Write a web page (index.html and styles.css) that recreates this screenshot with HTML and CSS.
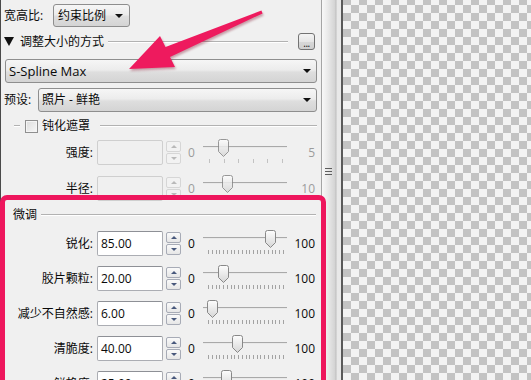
FILE: index.html
```html
<!DOCTYPE html>
<html lang="zh-CN">
<head>
<meta charset="utf-8">
<title>PhotoZoom</title>
<link rel="stylesheet" href="styles.css">
</head>
<body>
<div class="app">
  <div class="panel">
    <div class="row r-aspect">
      <span class="lbl lbl-aspect">宽高比:</span>
      <div class="combo combo-aspect"><span>约束比例</span><i class="caret"></i></div>
    </div>

    <div class="row gh-method">
      <svg class="tri" width="10" height="9" viewBox="0 0 10 9"><path d="M0 0H10L5 9Z" fill="#111"/></svg>
      <span class="gh-text">调整大小的方式</span>
      <span class="groove"></span>
      <button class="dots">...</button>
    </div>

    <div class="combo combo-wide"><span>S-Spline Max</span><i class="caret"></i></div>

    <div class="row r-preset">
      <span class="lbl lbl-preset">预设:</span>
      <div class="combo combo-preset"><span>照片 - 鲜艳</span><i class="caret"></i></div>
    </div>

    <div class="row gh-mask">
      <span class="groove lead"></span>
      <span class="check"></span>
      <span class="gh-text mask-text">钝化遮罩</span>
      <span class="groove"></span>
    </div>

    <div class="param disabled p-first">
      <span class="plabel">强度:</span>
      <span class="input"></span>
      <span class="spin"><i class="up"></i><i class="down"></i></span>
      <span class="min">0</span>
      <div class="slider"><span class="track"></span><span class="ticks t5"></span><span class="thumb" style="left:15px"></span></div>
      <span class="max">5</span>
    </div>

    <div class="param disabled p-second">
      <span class="plabel">半径:</span>
      <span class="input"></span>
      <span class="spin"><i class="up"></i><i class="down"></i></span>
      <span class="min">0</span>
      <div class="slider"><span class="track"></span><span class="ticks t10"></span><span class="thumb" style="left:19px"></span></div>
      <span class="max">10</span>
    </div>

    <div class="row gh-fine">
      <span class="gh-text fine-text">微调</span>
      <span class="groove"></span>
    </div>

    <div class="param p-fine-first">
      <span class="plabel">锐化:</span>
      <span class="input">85.00</span>
      <span class="spin"><i class="up"></i><i class="down"></i></span>
      <span class="min">0</span>
      <div class="slider"><span class="track"></span><span class="ticks t20"></span><span class="thumb" style="left:62px"></span></div>
      <span class="max">100</span>
    </div>

    <div class="param p-fine">
      <span class="plabel">胶片颗粒:</span>
      <span class="input">20.00</span>
      <span class="spin"><i class="up"></i><i class="down"></i></span>
      <span class="min">0</span>
      <div class="slider"><span class="track"></span><span class="ticks t20"></span><span class="thumb" style="left:15px"></span></div>
      <span class="max">100</span>
    </div>

    <div class="param p-fine">
      <span class="plabel">减少不自然感:</span>
      <span class="input">6.00</span>
      <span class="spin"><i class="up"></i><i class="down"></i></span>
      <span class="min">0</span>
      <div class="slider"><span class="track"></span><span class="ticks t20"></span><span class="thumb" style="left:4px"></span></div>
      <span class="max">100</span>
    </div>

    <div class="param p-fine">
      <span class="plabel">清脆度:</span>
      <span class="input">40.00</span>
      <span class="spin"><i class="up"></i><i class="down"></i></span>
      <span class="min">0</span>
      <div class="slider"><span class="track"></span><span class="ticks t20"></span><span class="thumb" style="left:29px"></span></div>
      <span class="max">100</span>
    </div>

    <div class="param p-fine">
      <span class="plabel">鲜艳度:</span>
      <span class="input">25.00</span>
      <span class="spin"><i class="up"></i><i class="down"></i></span>
      <span class="min">0</span>
      <div class="slider"><span class="track"></span><span class="ticks t20"></span><span class="thumb" style="left:18px"></span></div>
      <span class="max">100</span>
    </div>
  </div>

  <div class="vscroll"><span class="grip"></span></div>
  <div class="divider"></div>
  <div class="canvas"></div>

  <div class="callout-box"></div>
  <svg class="arrow" width="531" height="380" viewBox="0 0 531 380">
    <path d="M129 69 L175 67 L170 57 L262.6 13.4 L261.4 10.6 L165.5 47 L160 36 Z" fill="#ee1a5e"/>
  </svg>
</div>
</body>
</html>
```

FILE: styles.css
```css
* { box-sizing: border-box; }
html, body { margin: 0; padding: 0; }
body {
  width: 531px;
  height: 380px;
  overflow: hidden;
  font-family: "Open Sans", "Noto Sans CJK SC", sans-serif;
  font-size: 12px;
  color: #0a0a0a;
  background: #f0f0f0;
}
.app {
  position: relative;
  display: flex;
  width: 531px;
  height: 380px;
  overflow: hidden;
}
.panel {
  width: 321px;
  flex: none;
  border-left: 1px solid #4a4a4a;
  background: #f0f0f0;
  padding: 4px 4px 0 3px;
  display: flex;
  flex-direction: column;
}
.row { display: flex; align-items: center; flex: none; }
.lbl { line-height: 16px; white-space: nowrap; }

.combo {
  display: flex;
  align-items: center;
  border: 1px solid #8e8e8e;
  border-radius: 3px;
  background: linear-gradient(#f6f6f6, #ececec 45%, #dedede 55%, #d4d4d4);
  padding-left: 4px;
  line-height: 16px;
  white-space: nowrap;
  flex: none;
}
.caret {
  margin-left: auto;
  width: 0;
  height: 0;
  border-left: 4px solid transparent;
  border-right: 4px solid transparent;
  border-top: 4px solid #111;
}
.r-aspect { height: 23px; }
.lbl-aspect { width: 49px; }
.combo-aspect { width: 77px; height: 23px; }
.combo-aspect .caret { margin-right: 6px; }

.gh-method { height: 17px; margin-top: 6px; }
.tri { display: block; flex: none; }
.gh-text { line-height: 16px; white-space: nowrap; }
.gh-method .gh-text { margin-left: 6px; }
.groove {
  flex: 1;
  height: 2px;
  border-top: 1px solid #b2b2b2;
  border-bottom: 1px solid #ffffff;
}
.gh-method .groove { margin-left: 4px; margin-right: 10px; }
.dots {
  width: 17px;
  height: 17px;
  margin: 0 2px 0 0;
  padding: 0;
  border: 1px solid #737373;
  border-radius: 3px;
  background: linear-gradient(#f4f4f4, #e6e6e6 50%, #d8d8d8 50%, #cfcfcf);
  font: 10px/18px "Open Sans", sans-serif;
  color: #111;
  letter-spacing: -0.5px;
  text-align: center;
}

.combo-wide {
  margin-top: 9px;
  margin-left: 1px;
  height: 24px;
  font-size: 13px;
  padding-left: 3px;
}
.combo-wide .caret, .combo-preset .caret { margin-right: 5px; }

.r-preset { height: 24px; margin-top: 5px; }
.lbl-preset { width: 34px; }
.combo-preset { flex: 1; height: 24px; padding-left: 3px; }

.gh-mask { height: 16px; margin-top: 6px; }
.groove.lead { flex: none; width: 6px; margin-left: -2px; }
.check {
  width: 13px;
  height: 13px;
  margin-left: 5px;
  border: 1px solid #8f8f8f;
  background: linear-gradient(135deg, #dcdcdc, #f7f7f7);
  box-shadow: inset 0 0 0 1px #f4f4f4;
  flex: none;
}
.mask-text { margin-left: 4px; }
.gh-mask .groove { margin-left: 10px; }

.param {
  display: flex;
  height: 25px;
  flex: none;
}
.p-first { margin-top: 6px; }
.p-second { margin-top: 11px; }
.p-fine-first { margin-top: 8px; }
.p-fine { margin-top: 10px; }
.plabel {
  width: 89px;
  text-align: right;
  line-height: 25px;
  white-space: nowrap;
}
.input {
  width: 66px;
  margin-left: 4px;
  border: 1px solid #abadb3;
  border-top-color: #8e9096;
  border-radius: 2px;
  background: #fff;
  padding-left: 3px;
  line-height: 23px;
}
.disabled .input {
  background: #f0f0f0;
  border-color: #cfcfcf;
}
.spin {
  width: 15px;
  margin-left: 3px;
  display: flex;
  flex-direction: column;
  gap: 1px;
  padding-top: 1px;
}
.spin i {
  height: 11px;
  border: 1px solid #a7abb6;
  border-radius: 2px;
  background: linear-gradient(#fafafa, #e6e6e6);
  display: flex;
  align-items: center;
  justify-content: center;
}
.spin i::after {
  content: "";
  width: 0;
  height: 0;
  border-left: 3px solid transparent;
  border-right: 3px solid transparent;
}
.spin .up::after { border-bottom: 3px solid #48587c; }
.spin .down::after { border-top: 3px solid #48587c; }
.disabled .spin i { border-color: #d6d6d6; background: #f2f2f2; }
.disabled .spin .up::after { border-bottom-color: #b9b9b9; }
.disabled .spin .down::after { border-top-color: #b9b9b9; }

.min {
  width: 7px;
  margin-left: 7px;
  line-height: 25px;
}
.disabled .min, .disabled .max { color: #9c9c9c; }
.slider {
  position: relative;
  width: 84px;
  margin-left: 8px;
}
.track {
  display: block;
  margin-top: 6px;
  height: 2px;
  border-top: 1px solid #a9a9a9;
  border-bottom: 1px solid #e9e9e9;
}
.ticks {
  display: block;
  margin-top: 11px;
  margin-left: 5px;
  height: 4px;
  width: 77px;
}
.t20 { background: repeating-linear-gradient(to right, #a3a3a3 0 1px, transparent 1px 3.75px); }
.t5 { margin-left: 6px; width: 75px; background: repeating-linear-gradient(to right, #c2c2c2 0 1px, transparent 1px 14.6px); }
.t10 { margin-left: 6px; width: 75px; background: repeating-linear-gradient(to right, #c2c2c2 0 1px, transparent 1px 7.3px); }
.thumb {
  position: absolute;
  top: -1px;
  width: 11px;
  height: 18px;
  background: url("data:image/svg+xml,%3Csvg xmlns='http://www.w3.org/2000/svg' width='11' height='18'%3E%3Cdefs%3E%3ClinearGradient id='g' x1='0' y1='0' x2='0' y2='1'%3E%3Cstop offset='0' stop-color='%23fdfdfd'/%3E%3Cstop offset='1' stop-color='%23d6d6d6'/%3E%3C/linearGradient%3E%3C/defs%3E%3Cpath d='M0.5 2.5Q0.5 0.5 2.5 0.5H8.5Q10.5 0.5 10.5 2.5V12.5L5.5 17.5L0.5 12.5Z' fill='url(%23g)' stroke='%23888'/%3E%3C/svg%3E") no-repeat;
}
.disabled .thumb { opacity: 0.85; }
.max {
  width: 28px;
  text-align: right;
  line-height: 25px;
}

.gh-fine { height: 16px; margin-top: 6px; }
.fine-text { margin-left: 9px; }
.gh-fine .groove { margin-left: 4px; margin-right: 1px; }

.vscroll {
  width: 20px;
  flex: none;
  background: linear-gradient(to right, #a5a5a5 0 1px, #f8f8f8 1px, #ececec 6px, #d3d3d3 14px, #bdbdbd 15px, #e8e8e8 16px);
  padding: 168px 0 0 4px;
}
.grip {
  display: block;
  width: 7px;
  height: 7px;
  background: repeating-linear-gradient(#5d5d5d 0 1px, transparent 1px 3px);
}
.divider { width: 2px; flex: none; background: #5a5a5a; }
.canvas {
  flex: 1;
  background: repeating-conic-gradient(#f3f3f3 0 25%, #c3c3c3 0 50%) 0 -3px / 16px 16px;
}

.callout-box {
  position: absolute;
  left: 0;
  top: 195px;
  width: 326px;
  height: 200px;
  border: 5px solid #ee165d;
  border-radius: 7px;
  pointer-events: none;
}
.arrow {
  position: absolute;
  left: 0;
  top: 0;
  pointer-events: none;
  filter: drop-shadow(1px 2px 1px rgba(120, 0, 30, 0.35));
}
```
